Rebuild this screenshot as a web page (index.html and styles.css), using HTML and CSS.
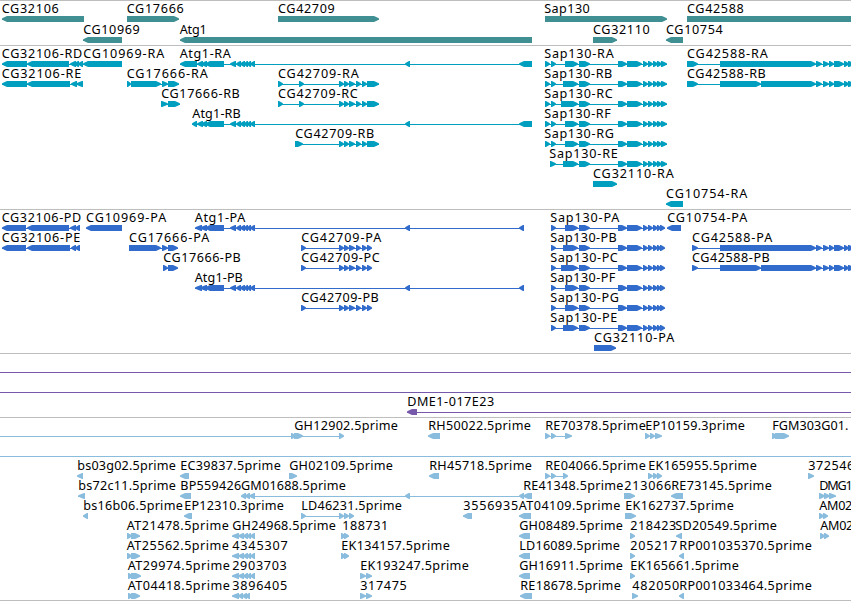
FILE: index.html
```html
<!DOCTYPE html>
<html lang="en">
<head>
<meta charset="utf-8">
<title>Genome browser tracks</title>
<link rel="stylesheet" href="styles.css">
</head>
<body>
<main class="browser">
<section class="track genes" data-track="genes"></section>
<section class="track transcripts" data-track="transcripts"></section>
<section class="track proteins" data-track="proteins"></section>
<section class="track clones" data-track="clones"></section>
<section class="track ests" data-track="ests"></section>
</main>
<script src="tracks.js"></script>
</body>
</html>
```
FILE: styles.css
```css
body {
  margin: 0;
  background: #fff;
}
.browser {
  display: flex;
  flex-direction: column;
  width: 851px;
  height: 600px;
  border-bottom: 1px solid #bebebe;
  overflow: hidden;
}
.track {
  display: flex;
  flex-direction: column;
  flex: none;
  box-sizing: border-box;
  border-top: 1px solid #bebebe;
  padding-bottom: 3px;
}
.row {
  display: block;
  flex: none;
  width: 851px;
  height: 20px;
  overflow: visible;
  fill: currentColor;
}
.genes { color: #408f93; padding-bottom: 2px; }
.genes .row { height: 21px; }
.transcripts { color: #009ebf; }
.proteins { color: #316ccc; }
.clones { color: #7759ab; }
.ests { color: #8abddd; padding-bottom: 2px; }
.intron { shape-rendering: crispEdges; }
.label {
  fill: #000;
  font-family: "Noto Sans", "DejaVu Sans", sans-serif;
  font-size: 12.6px;
}
```
FILE: tracks.js
```js
// Feature: "direction | start-end exons | label | label start | label end"
const sapTail = "579-590 618-627 627-642 643-648 648-653 653-658 657-662 661-667";
const sapCds = "579-590 618-627 627-642 643-648 648-653 653-658 657-661 660-665";
const cgTail = "339-344 344-349 349-355 356-361 362-367 367-379";
const cgCds = "301-306 339-344 344-349 349-355 356-361 362-367 367-372";
const atgMid = "205-224 230-236 236-241 240-245 244-248 247-251 250-255 405-410";
const end588 = "816-822 823-829 829-834 834-844 844-849 848-854";
const est5 = "232-239 238-244 243-248 247-251 250-255";

const tracks = {
  genes: [
    ["<|2-84|CG32106|2|58.5", ">|127-179|CG17666|127|183.5", ">|278-379|CG42709|278.3|334.5", ">|545-667|Sap130|544.5|589.5", ">|687-870|CG42588|687.3|743.5"],
    ["<|83-122|CG10969|83.5|139.5", "<|180-532|Atg1|180|206.5", ">|593-617|CG32110|593.3|649.5", "<|666-683|CG10754|666.3|722.5"]
  ],
  transcripts: [
    ["<|2-27 27-69 70-76 74-79 78-83|CG32106-RD|2|82", "<|83-122|CG10969-RA|83.5|164", `<|180-197 197-203 201-207 ${atgMid} 519-532|Atg1-RA|180|230.5`, `>|545-550 551-556 565-578 ${sapTail}|Sap130-RA|544.5|613.5`, `>|687-698 720-816 ${end588}|CG42588-RA|687.3|767.5`],
    ["<|2-27 27-70 71-77 76-83|CG32106-RE|2|81", ">|127-131 131-161 162-168 168-179|CG17666-RA|127|207.5", `>|278-283 299-304 ${cgTail}|CG42709-RA|278.3|358.5`, `>|545-550 551-556 563-578 ${sapTail}|Sap130-RB|544.5|612`, `>|687-698 720-761 761-816 ${end588}|CG42588-RB|687.3|765.5`],
    [">|161-168 168-180|CG17666-RB|161.5|239.5", `>|278-283 299-304 ${cgTail}|CG42709-RC|278.3|357.5`, `>|545-550 551-556 561-578 ${sapTail}|Sap130-RC|544.5|612.5`],
    [`<|192-197 197-203 201-207 ${atgMid} 519-532|Atg1-RB|192.5|240.5`, `>|545-550 551-556 565-578 ${sapTail}|Sap130-RF|544.5|610.5`],
    [`>|295-303 ${cgTail}|CG42709-RB|295.5|374`, `>|545-550 551-556 565-578 ${sapTail}|Sap130-RG|544.5|613.5`],
    [`>|550-556 563-578 ${sapTail}|Sap130-RE|549.5|617.5`],
    [">|593-617|CG32110-RA|593.3|673.5"],
    ["<|666-683|CG10754-RA|666.3|747"]
  ],
  proteins: [
    ["<|2-26 27-69 70-76 75-80|CG32106-PD|2|81", "<|86-122|CG10969-PA|86.3|166", `<|195-202 200-207 ${atgMid} 519-524|Atg1-PA|195|245`, `>|551-556 565-578 ${sapCds}|Sap130-PA|550.5|619`, "<|667-681|CG10754-PA|667.5|747"],
    ["<|2-26 27-70 71-76 75-80|CG32106-PE|2|80", ">|129-161 162-168 168-178|CG17666-PA|129.3|209", `>|${cgCds}|CG42709-PA|301.5|381`, `>|551-556 563-578 ${sapCds}|Sap130-PB|550.5|616.5`, `>|692-698 720-816 ${end588}|CG42588-PA|692.3|772`],
    [">|163-168 168-178|CG17666-PB|163.5|240.5", `>|${cgCds}|CG42709-PC|301.5|379.5`, `>|551-556 561-578 ${sapCds}|Sap130-PC|550.5|617.5`, `>|692-698 720-761 761-816 ${end588}|CG42588-PB|692.3|769.5`],
    [`<|195-202 200-207 ${atgMid} 519-524|Atg1-PB|195|242.5`, `>|551-556 565-578 ${sapCds}|Sap130-PF|550.5|615`],
    [`>|${cgCds}|CG42709-PB|301.5|378.5`, `>|551-556 565-578 ${sapCds}|Sap130-PG|550.5|618.5`],
    [`>|551-556 563-578 ${sapCds}|Sap130-PE|550.5|617`],
    [">|594-616|CG32110-PA|594.3|674"]
  ],
  clones: [
    ["-|0-851"],
    ["-|0-851"],
    ["<|407-417 860-870|DME1-017E23|407.5|494"]
  ],
  ests: [
    ["-|0-292", ">|291-296 294-303 339-344|GH12902.5prime|294.5|397.5", "<|428-440|RH50022.5prime|428.5|530.5", ">|545-550 551-556 565-572|RE70378.5prime|545.5|645.5", ">|645-650 650-655 655-662|EP10159.3prime|645.5|744.5", ">|772-778 775-789|FGM303G01.|772.5|848"],
    ["-|0-851"],
    ["<|77-83|bs03g02.5prime|77.5|175.5", "<|180-189|EC39837.5prime|180.5|280.5", ">|289-297|GH02109.5prime|289.5|392.5", "<|429-439|RH45718.5prime|429.5|531.5", ">|545-550 551-556 563-568|RE04066.5prime|545.5|645.5", ">|648-653 653-658 657-662|EK165955.5prime|648.5|756.5", ">|808-814|372546|808.5|854"],
    ["<|78-85|bs72c11.5prime|78.5|175.5", "<|180-191|BP559426|180.5|241", "<|241-246 245-250 249-255 405-410 519-524 523-532|GM01688.5prime|241.3|345.5", "-|0-0|RE41348.5prime|523.5|623", ">|624-635|213066|624.5|671", "<|671-683|RE73145.5prime|671.5|771.5", ">|819-825 824-830 829-836|DMG1|819.5|852.5"],
    ["<|83-88|bs16b06.5prime|83.5|182.5", "<|184-192|EP12310.3prime|184.5|283.5", ">|301-306 339-344 344-349 349-354|LD46231.5prime|301.5|401.5", "<|463-472|3556935|463.5|518", "<|519-531|AT04109.5prime|519|620", ">|625-636|EK162737.5prime|625.5|733.5", ">|819-824 823-828|AM02|819.5|852"],
    [">|127-132 131-140|AT21478.5prime|127|228.5", `<|${est5}|GH24968.5prime|232.5|335.5`, ">|341-346 344-349|188731|342.5|388", "<|519-530|GH08489.5prime|519.5|622.5", ">|630-635|218423|630.5|676", "<|676-682|SD20549.5prime|675.5|776.5", ">|820-825 824-829|AM02|820.5|853"],
    [">|127-132 131-140|AT25562.5prime|127|228.5", `<|${est5}|4345307|232.5|287.5`, ">|341-346 344-349|EK134157.5prime|341.5|449.5", "<|519-530|LD16089.5prime|519.5|619.5", ">|630-635|205217|630.5|677", "<|679-684|RP001035370.5prime|679.5|811.5"],
    [">|128-133 131-141|AT29974.5prime|128|229.5", `<|${est5}|2903703|232.5|286.5`, ">|360-366 366-372|EK193247.5prime|360.5|468.5", "<|519-530|GH16911.5prime|519.5|622.5", ">|630-635|EK165661.5prime|630.5|738.5"],
    [">|128-133 131-140|AT04418.5prime|128|229.5", "<|232-239 238-243 242-247 245-250|3896405|232.5|287", ">|360-366 366-372|317475|360.5|406.5", "<|520-532|RE18678.5prime|520.5|620.5", ">|632-638|482050|632.5|679", "<|679-684|RP001033464.5prime|679.5|811.5"]
  ]
};

const NS = "http://www.w3.org/2000/svg";

function add(parent, name, attrs) {
  const node = document.createElementNS(NS, name);
  for (const key in attrs) node.setAttribute(key, attrs[key]);
  parent.appendChild(node);
  return node;
}

// A flat body that narrows to a rounded arrow head.
function drawExon(svg, a, b, direction) {
  const width = b - a;
  const forward = direction === ">";
  const sign = forward ? 1 : -1;
  const head = width > 7 ? 5 : width - 1;
  const tip = forward ? b : a;
  const tail = forward ? a : b;
  const base = tip - sign * head;
  const mid = tip - sign * head * 0.45;
  add(svg, "path", {
    class: "exon",
    d: `M${tail} 15H${base}L${mid} 16.2L${tip} 17.5V18.5L${mid} 19.8L${base} 21H${tail}Z`
  });
}

function drawFeature(svg, spec) {
  const [direction, spans, label, start, end] = spec.split("|");
  const exons = spans.split(" ").map(span => span.split("-").map(Number));
  const first = exons[0][0];
  const last = exons[exons.length - 1][1];
  add(svg, "rect", { class: "intron", x: first, y: 18, width: last - first, height: 1 });
  if (direction !== "-") exons.forEach(([a, b]) => drawExon(svg, a, b, direction));
  if (label) {
    const text = add(svg, "text", {
      class: "label", x: start - 0.3, y: 12,
      textLength: end - start + 0.6, lengthAdjust: "spacing"
    });
    text.textContent = label;
  }
}

document.querySelectorAll("[data-track]").forEach(section => {
  tracks[section.dataset.track].forEach(features => {
    const svg = add(section, "svg", { class: "row" });
    features.forEach(spec => drawFeature(svg, spec));
  });
});
```
